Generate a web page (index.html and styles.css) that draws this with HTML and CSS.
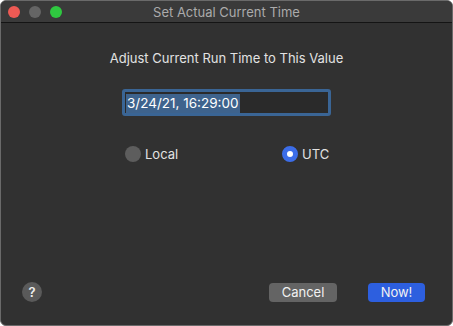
FILE: index.html
```html
<!DOCTYPE html>
<html lang="en">
<head>
    <meta charset="UTF-8">
    <meta name="viewport" content="width=device-width, initial-scale=1.0">
    <title>Set Actual Current Time</title>
    <link rel="stylesheet" href="styles.css">
</head>
<body>
    <div class="window">
        <div class="titlebar">
            <div class="lights">
                <span class="light red"></span>
                <span class="light gray"></span>
                <span class="light green"></span>
            </div>
            <div class="title">Set Actual Current Time</div>
        </div>

        <div class="content">
            <div class="prompt">Adjust Current Run Time to This Value</div>

            <div class="field">
                <span class="selected">3/24/21, 16:29:00</span>
            </div>

            <div class="radios">
                <label class="radio">
                    <span class="dot"></span>
                    <span>Local</span>
                </label>
                <label class="radio">
                    <span class="dot on"></span>
                    <span>UTC</span>
                </label>
            </div>

            <div class="footer">
                <button class="help">?</button>
                <div class="spacer"></div>
                <button class="btn cancel">Cancel</button>
                <button class="btn primary">Now!</button>
            </div>
        </div>
    </div>
</body>
</html>
```

FILE: styles.css
```css
html, body {
    margin: 0;
    height: 100%;
    background: #fff;
}

body {
    font-family: Inter, "Noto Sans", sans-serif;
    font-size: 13px;
    color: #e0e0e0;
}

.window {
    box-sizing: border-box;
    height: 100%;
    display: flex;
    flex-direction: column;
    background: #313131;
    border: 1px solid #6a6a6a;
    border-radius: 6px;
    overflow: hidden;
}

.titlebar {
    position: relative;
    height: 21px;
    flex-shrink: 0;
    display: flex;
    align-items: center;
    justify-content: center;
    background: #3a3a3a;
    border-bottom: 1px solid #141414;
}

.lights {
    position: absolute;
    left: 7px;
    top: 5px;
    display: flex;
    gap: 9px;
}

.light {
    width: 12px;
    height: 12px;
    border-radius: 50%;
}

.red { background: #ee5a54; }
.gray { background: #656565; }
.green { background: #2fc840; }

.title {
    color: #ababab;
    font-size: 13px;
}

.content {
    flex: 1;
    display: flex;
    flex-direction: column;
}

.prompt {
    margin-top: 27px;
    text-align: center;
    line-height: 16px;
    color: #e2e2e2;
}

.field {
    box-sizing: border-box;
    align-self: flex-start;
    margin: 23px 0 0 121px;
    width: 209px;
    height: 27px;
    padding: 3px 0 0 1px;
    background: #2a2a2a;
    border: 3px solid #3a6595;
    border-radius: 3px;
}

.selected {
    display: inline-block;
    margin-top: -2px;
    padding: 0 1px;
    line-height: 19px;
    font-size: 13.5px;
    background: #3e638d;
    color: #fff;
}

.radios {
    margin: 30px 0 0 124px;
    display: grid;
    grid-template-columns: 157px 157px;
}

.radio {
    display: flex;
    align-items: center;
    gap: 4px;
    color: #e2e2e2;
}

.dot {
    box-sizing: border-box;
    width: 16px;
    height: 16px;
    border-radius: 50%;
    background: #5d5d5d;
}

.dot.on {
    border: 5px solid #3c6de8;
    background: #fff;
}

.footer {
    margin-top: auto;
    margin-bottom: 23px;
    padding: 0 27px 0 21px;
    display: flex;
    align-items: center;
}

.spacer {
    flex: 1;
}

button {
    font-family: inherit;
    border: none;
    cursor: pointer;
}

.help {
    width: 20px;
    height: 20px;
    padding: 0;
    border-radius: 50%;
    background: #5a5a5a;
    color: #eee;
    font-size: 13px;
    font-weight: 600;
}

.btn {
    height: 19px;
    padding: 0;
    border-radius: 4px;
    font-size: 13px;
    color: #f2f2f2;
}

.cancel {
    width: 68px;
    background: #646464;
}

.primary {
    width: 57px;
    margin-left: 31px;
    background: #2d5fdf;
}
```
